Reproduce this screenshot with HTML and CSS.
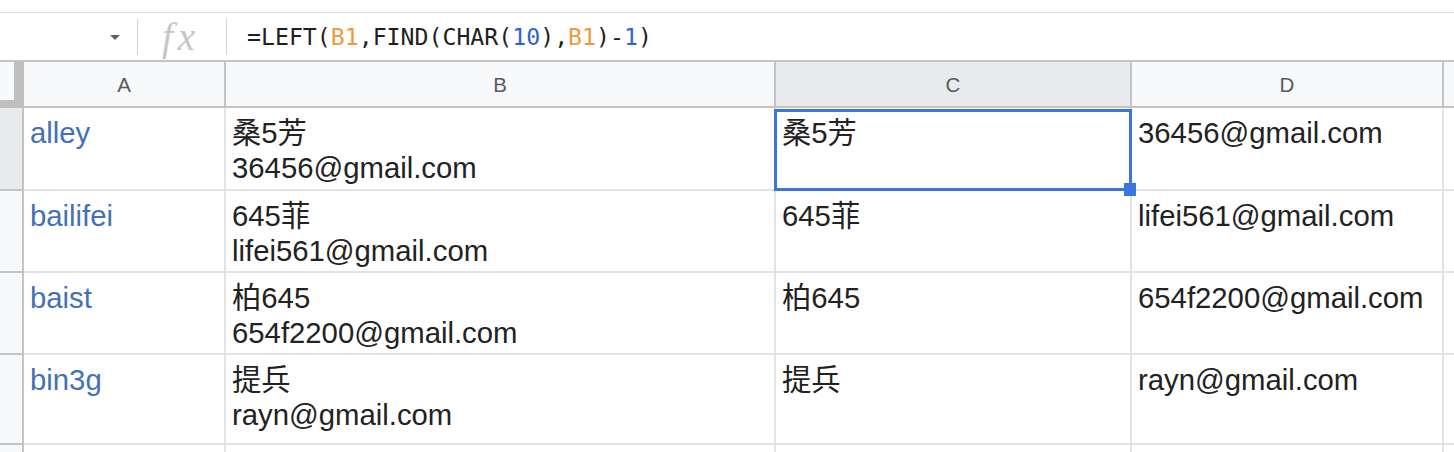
FILE: index.html
```html
<!DOCTYPE html>
<html lang="zh">
<head>
<meta charset="utf-8">
<title>Sheet</title>
<link rel="stylesheet" href="styles.css">
</head>
<body>
<div class="topgap"></div>
<div class="fbar">
  <div class="namebox"><span class="caret"></span></div>
  <div class="sep"></div>
  <div class="fx">fx</div>
  <div class="sep"></div>
  <div class="formula">=LEFT(<span class="ref">B1</span>,FIND(CHAR(<span class="num">10</span>),<span class="ref">B1</span>)-<span class="num">1</span>)</div>
</div>
<div class="sheet">
  <div class="corner"></div>
  <div class="colhdr">A</div>
  <div class="colhdr">B</div>
  <div class="colhdr sel">C</div>
  <div class="colhdr">D</div>
  <div class="colhdr last"></div>

  <div class="rowhdr sel"></div>
  <div class="cell name">alley</div>
  <div class="cell">桑5芳<br>36456@gmail.com</div>
  <div class="cell active">桑5芳<span class="selbox"></span><span class="handle"></span></div>
  <div class="cell">36456@gmail.com</div>
  <div class="cell"></div>

  <div class="rowhdr"></div>
  <div class="cell name">bailifei</div>
  <div class="cell">645菲<br>lifei561@gmail.com</div>
  <div class="cell">645菲</div>
  <div class="cell">lifei561@gmail.com</div>
  <div class="cell"></div>

  <div class="rowhdr"></div>
  <div class="cell name">baist</div>
  <div class="cell">柏645<br>654f2200@gmail.com</div>
  <div class="cell">柏645</div>
  <div class="cell">654f2200@gmail.com</div>
  <div class="cell"></div>

  <div class="rowhdr"></div>
  <div class="cell name">bin3g</div>
  <div class="cell">提兵<br>rayn@gmail.com</div>
  <div class="cell">提兵</div>
  <div class="cell">rayn@gmail.com</div>
  <div class="cell"></div>

  <div class="rowhdr"></div>
  <div class="cell"></div>
  <div class="cell"></div>
  <div class="cell"></div>
  <div class="cell"></div>
  <div class="cell"></div>
</div>
</body>
</html>
```

FILE: styles.css
```css
* { box-sizing: border-box; }
html, body {
  margin: 0;
  padding: 0;
  background: #ffffff;
  width: 1454px;
  height: 452px;
  overflow: hidden;
}
body {
  font-family: "Liberation Sans", Arial, "Noto Sans CJK SC", sans-serif;
}
.topgap {
  height: 13px;
  border-bottom: 1px solid #dadce0;
}
.fbar {
  display: flex;
  align-items: center;
  height: 49px;
  border-bottom: 2px solid #c4c4c4;
}
.namebox {
  width: 137px;
  height: 100%;
  display: flex;
  justify-content: flex-end;
  align-items: center;
  padding-right: 17px;
}
.caret {
  width: 0;
  height: 0;
  border-left: 5px solid transparent;
  border-right: 5px solid transparent;
  border-top: 5px solid #616161;
  margin-top: 2px;
}
.sep {
  width: 1px;
  height: 36px;
  background: #d2d2d2;
}
.fx {
  width: 88px;
  text-align: center;
  font-family: "Liberation Serif", "Times New Roman", serif;
  font-style: italic;
  font-size: 39px;
  letter-spacing: 5px;
  color: #c6c6c6;
  line-height: 40px;
  padding-right: 2px;
}
.formula {
  padding-left: 20px;
  font-family: "DejaVu Sans Mono", "Liberation Mono", monospace;
  font-size: 23.2px;
  color: #1f1f1f;
  line-height: 30px;
  white-space: nowrap;
}
.ref { color: #ec9a3d; }
.num { color: #2f62d1; }

.sheet {
  display: grid;
  grid-template-columns: 24px 202px 550px 356px 312px 1fr;
  grid-template-rows: 46px 83px 82px 82px 90px 1fr;
  height: 390px;
}
.corner {
  background: #f8f9fa;
  border-right: 10px solid #bfbfbf;
  border-bottom: 8px solid #bfbfbf;
}
.colhdr {
  background: #f8f9fa;
  border-right: 2px solid #c4c4c4;
  border-bottom: 2px solid #c4c4c4;
  display: flex;
  align-items: center;
  justify-content: center;
  font-size: 20.5px;
  color: #575b60;
  padding-top: 1px;
}
.colhdr.sel { background: #e8eaed; }
.colhdr.last { border-right: none; }
.rowhdr {
  background: #f8f9fa;
  border-right: 2px solid #c4c4c4;
  border-bottom: 2px solid #c4c4c4;
}
.rowhdr.sel { background: #e8eaed; }
.cell {
  border-right: 2px solid #e2e3e3;
  border-bottom: 2px solid #e2e3e3;
  padding: 7px 6px 0 6px;
  font-size: 29.3px;
  line-height: 35px;
  color: #222222;
  white-space: nowrap;
  overflow: visible;
}
.cell.name { color: #4471b6; }
.cell.active { position: relative; }
.selbox {
  position: absolute;
  left: -2px;
  top: 1px;
  width: 358px;
  height: 82px;
  border: 3px solid #3b76de;
}
.handle {
  position: absolute;
  left: 348px;
  top: 75px;
  width: 12px;
  height: 13px;
  background: #3b76de;
}
```
